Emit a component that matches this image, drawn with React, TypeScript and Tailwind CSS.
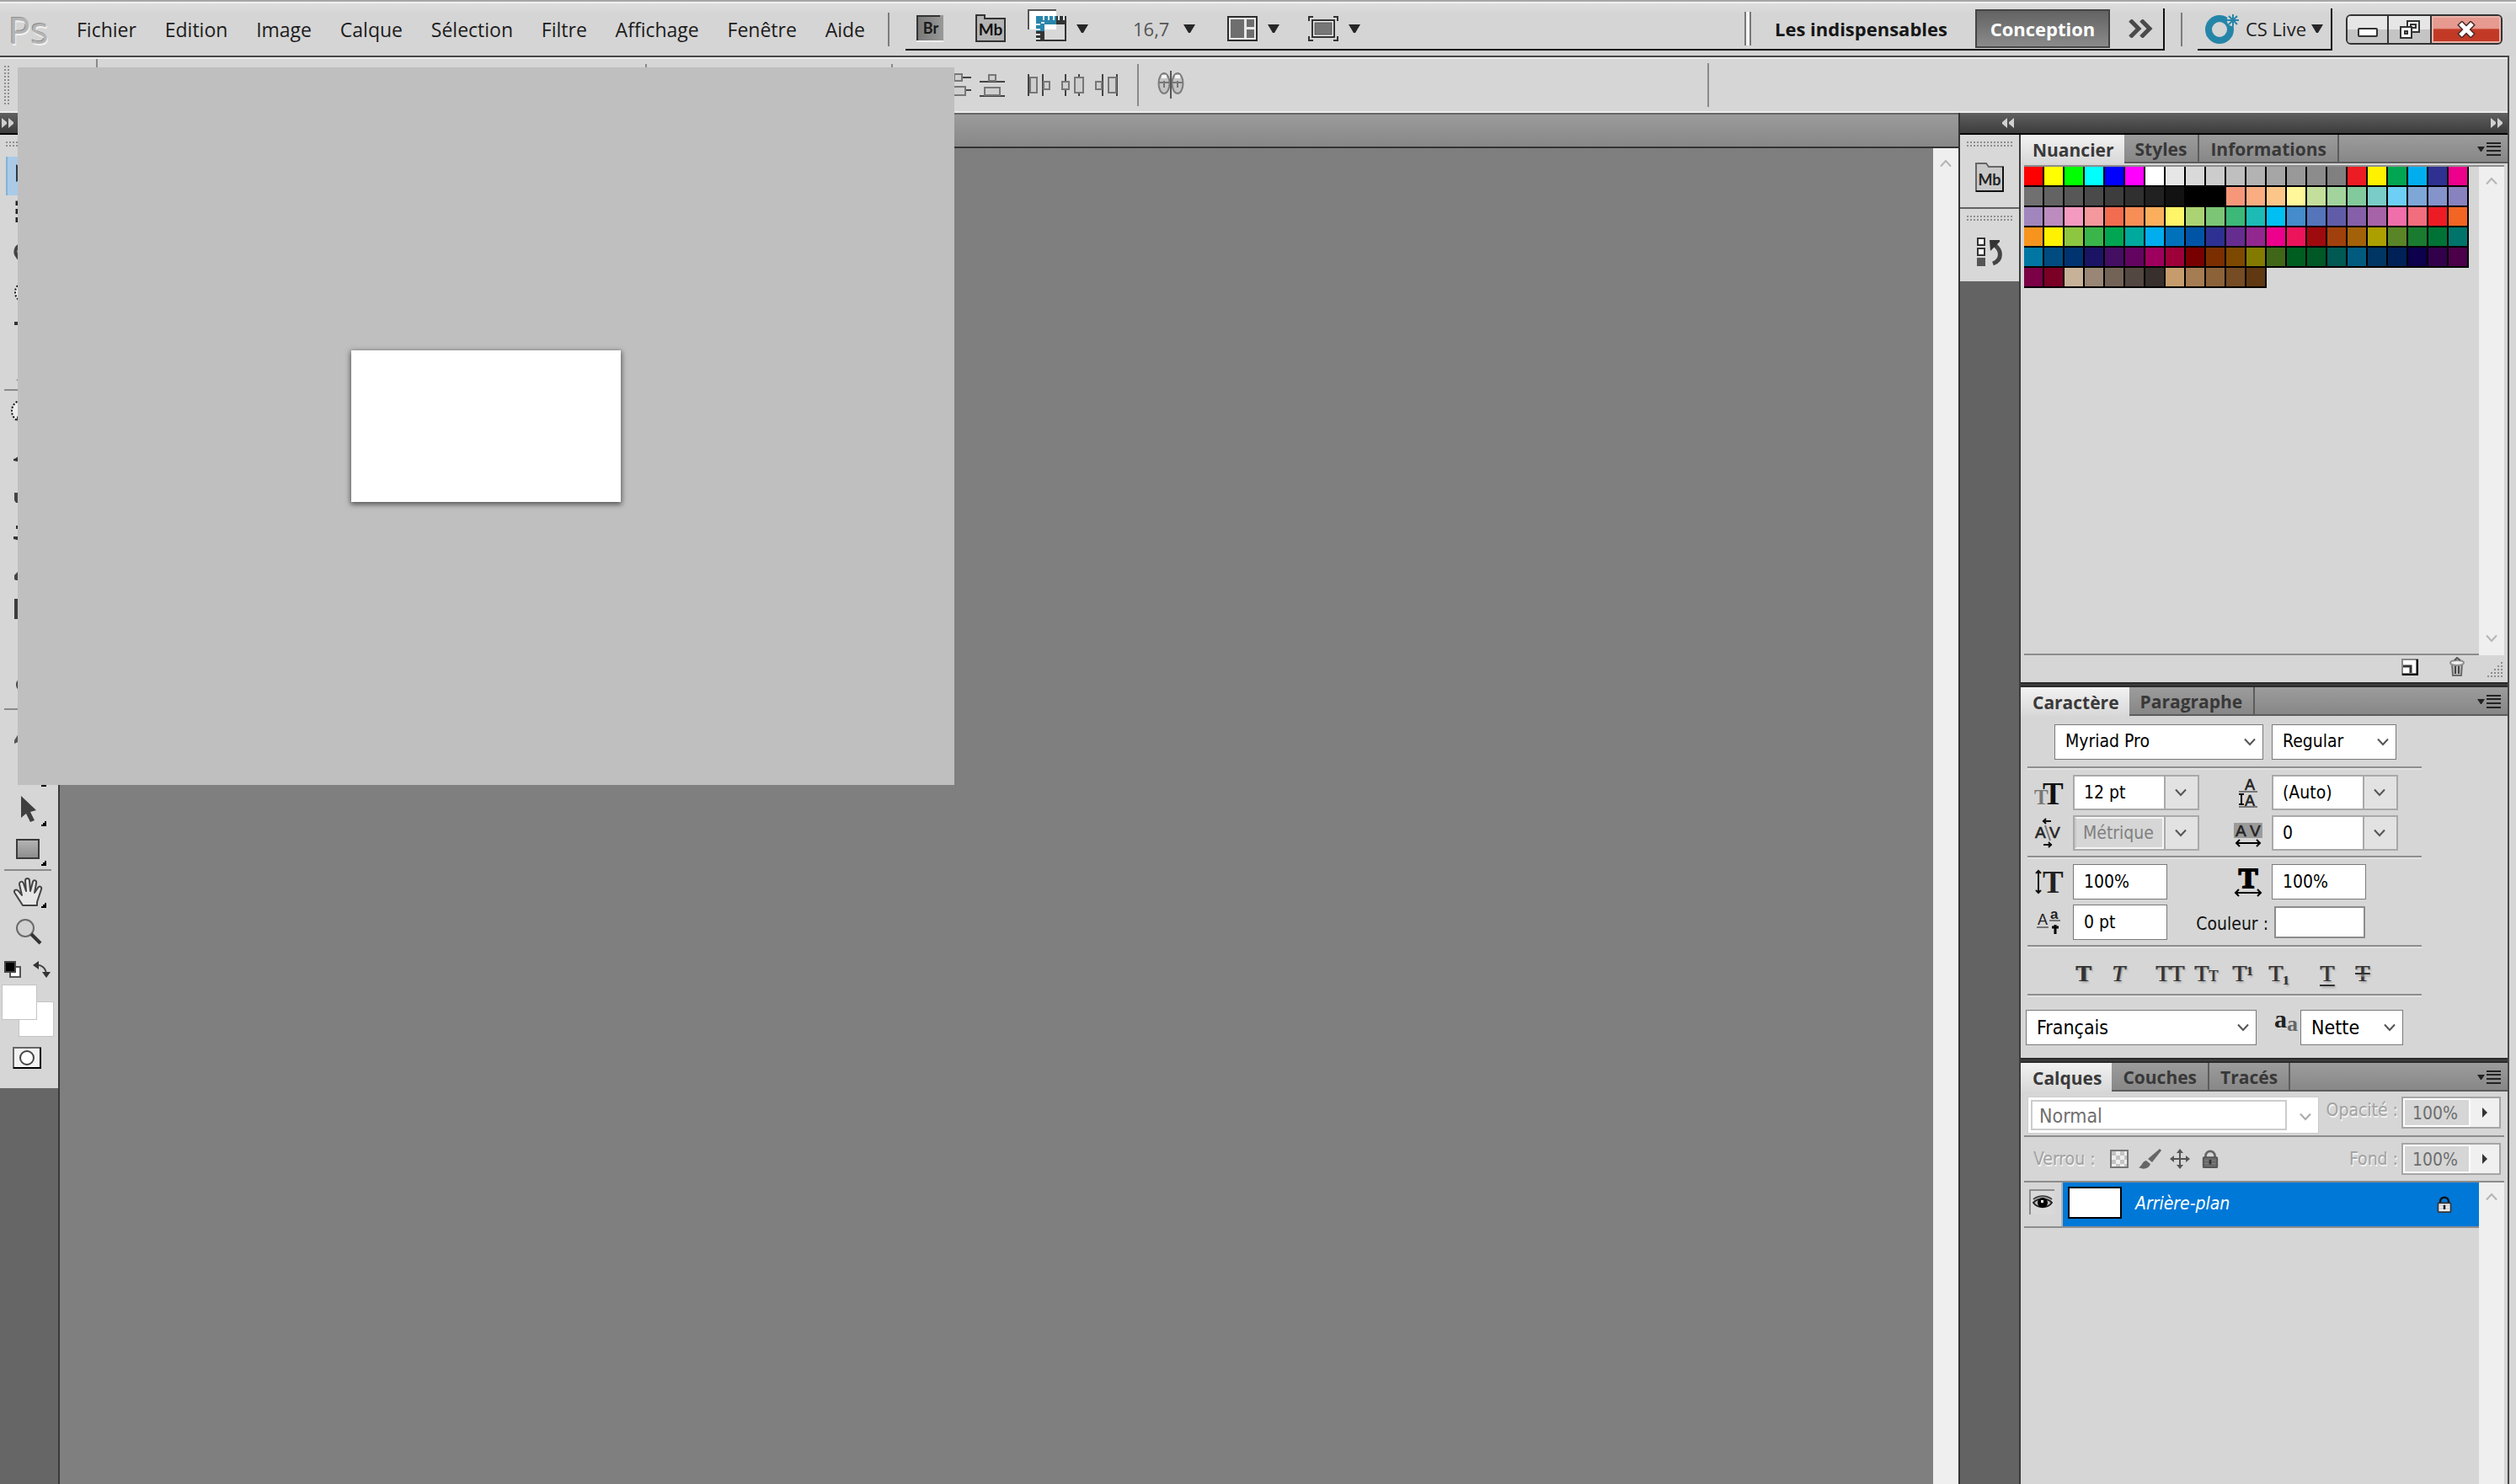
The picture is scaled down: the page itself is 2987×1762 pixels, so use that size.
import React from "react";

const UI = "font-['Open_Sans','Noto_Sans',sans-serif]";
const FIELD = "font-['DejaVu_Sans_Condensed','Noto_Sans',sans-serif]";

/* ---------- shared pieces ---------- */

function Caret({ className = "" }: { className?: string }) {
  return (
    <svg viewBox="0 0 14 10" className={"h-[10px] w-[14px] shrink-0 " + className} aria-hidden="true">
      <path d="M0 0H14L8 10H6Z" fill="#262626" />
    </svg>
  );
}

function Chevron({ up = false, color = "#555", className = "" }: { up?: boolean; color?: string; className?: string }) {
  return (
    <svg viewBox="0 0 14 10" className={"h-[10px] w-[14px] shrink-0 " + className} fill="none" stroke={color} strokeWidth="2" aria-hidden="true">
      <path d={up ? "M1 8.500L7 2L13 8.500" : "M1 1.500L7 8L13 1.500"} />
    </svg>
  );
}

function Grip({ cols, rows, className = "" }: { cols: number; rows: number; className?: string }) {
  const w = cols * 4 - 2;
  const h = rows * 4 - 2;
  const dots: React.ReactNode[] = [];
  for (let r = 0; r < rows; r++)
    for (let c = 0; c < cols; c++) dots.push(<rect key={r + "-" + c} x={c * 4} y={r * 4} width="2" height="2" fill="#8e8e8e" />);
  return (
    <svg width={w} height={h} viewBox={`0 0 ${w} ${h}`} className={"shrink-0 " + className} aria-hidden="true">
      {dots}
    </svg>
  );
}

function DoubleArrow({ left = false }: { left?: boolean }) {
  return (
    <svg viewBox="0 0 14 12" className="h-3 w-[14px] shrink-0" fill="#d0d0d0" aria-hidden="true">
      <path d={left ? "M6 0V12L0 7V5ZM14 0V12L8 7V5Z" : "M0 0V12L6 7V5ZM8 0V12L14 7V5Z"} />
    </svg>
  );
}

function Rule({ className = "" }: { className?: string }) {
  return <div className={"h-1 shrink-0 border-t-2 border-[#8f8f8f] bg-[#e2e2e2] " + className} />;
}

/* ---------- application bar ---------- */

const MENUS = ["Fichier", "Edition", "Image", "Calque", "Sélection", "Filtre", "Affichage", "Fenêtre", "Aide"];

function MbIcon() {
  return (
    <svg viewBox="0 0 36 34" className="h-[34px] w-9" aria-hidden="true">
      <path d="M1 32V1H11V5H35V32Z" fill="#b4b4b4" stroke="#333" strokeWidth="2" />
      <text x="18" y="25" textAnchor="middle" fontSize="19" fontWeight="700" fontFamily="Lato, sans-serif" fill="#111">Mb</text>
    </svg>
  );
}

function AppBar() {
  return (
    <header className="flex h-16 shrink-0 items-center border-t-2 border-[#f0f0f0] bg-[#d6d6d6] bg-linear-to-b from-[#dedede] to-[#d5d5d5] to-20% pr-4 pl-2.5">
      <div className="w-[81px] text-[44px] leading-none text-[#b4b4b4] [text-shadow:1px_2px_0_#f2f2f2,-1px_-1px_0_#8e8e8e]">Ps</div>
      <nav className="flex w-[963px] items-center justify-between pr-[27px] text-[23px] leading-8 text-[#1c1c1c]">
        {MENUS.map((m) => (
          <button key={m} type="button">{m}</button>
        ))}
      </nav>
      <div className="h-10 w-0.5 bg-[#7c7c7c]" />
      <div className="ml-[19px] flex h-[50px] min-w-0 flex-1 items-center border-r-2 border-b-2 border-[#111] pr-3 pl-[13px]">
        <button type="button" aria-label="Bridge" className="mr-[38px] h-8 w-8">
          <svg viewBox="0 0 32 32" className="h-8 w-8" aria-hidden="true">
            <defs>
              <linearGradient id="br" x1="0" x2="1"><stop offset="0" stopColor="#777" /><stop offset="1" stopColor="#999" /></linearGradient>
            </defs>
            <rect width="32" height="30" fill="url(#br)" />
            <path d="M1 30V1H28" fill="none" stroke="#333" strokeWidth="2" />
            <rect y="30" width="32" height="2" fill="#eee" />
            <text x="17" y="22" textAnchor="middle" fontSize="18" fontWeight="700" fontFamily="Lato, sans-serif" fill="#1a1a1a">Br</text>
          </svg>
        </button>
        <button type="button" aria-label="Mini Bridge" className="mr-[26px]"><MbIcon /></button>
        <button type="button" aria-label="Extras" className="mb-2 flex items-center gap-3">
          <svg viewBox="0 0 46 38" className="h-[38px] w-[46px]" aria-hidden="true">
            <rect x="1" y="1" width="33" height="23" fill="#fff" />
            <path d="M1 24V1H34" fill="none" stroke="#555" strokeWidth="2" />
            <rect x="10" y="8" width="36" height="30" fill="#333" />
            <rect x="20" y="18" width="24" height="18" fill="#d8d8d8" />
            <path d="M20 18H34V24H20Z" fill="#fff" />
            <path d="M10 8H34V18H20V26H10Z" fill="#2a86ab" />
            <path d="M16 16H20M19 8V13M25 8V13M31 8V13M37 8V13M43 8V13M10 18H15M10 24H15M10 30H15M10 35H15" stroke="#dfeef4" strokeWidth="2" />
          </svg>
          <Caret className="mt-2" />
        </button>
        <input aria-label="Niveau de zoom" defaultValue="16,7" className="ml-[53px] w-[60px] bg-transparent text-[22px] leading-8 text-[#555]" />
        <button type="button" aria-label="Choisir le zoom"><Caret /></button>
        <button type="button" aria-label="Réorganiser les documents" className="ml-[38px] flex items-center gap-3">
          <svg viewBox="0 0 36 30" className="h-[30px] w-9" aria-hidden="true">
            <rect x="1" y="1" width="34" height="28" fill="#e8e8e8" stroke="#2c2c2c" strokeWidth="2" />
            <rect x="4" y="4" width="16" height="22" fill="#6e6e6e" />
            <rect x="23" y="4" width="9" height="9" fill="#6e6e6e" />
            <rect x="23" y="16" width="9" height="10" fill="#6e6e6e" />
          </svg>
          <Caret />
        </button>
        <button type="button" aria-label="Mode d'écran" className="ml-[34px] flex items-center gap-3">
          <svg viewBox="0 0 36 30" className="h-[30px] w-9" fill="none" stroke="#333" strokeWidth="2" aria-hidden="true">
            <path d="M1 6V1H6M30 1H35V6M35 24V29H30M6 29H1V24" />
            <rect x="5" y="5" width="26" height="20" fill="#eee" />
            <rect x="8" y="8" width="20" height="14" fill="#777" stroke="#555" strokeWidth="1" />
          </svg>
          <Caret />
        </button>
        <div className="ml-auto h-10 w-2 border-x-2 border-[#777] bg-[#f4f4f4]" />
        <button type="button" className="ml-[28px] text-[22px] leading-8 font-bold whitespace-nowrap text-[#161616]">Les indispensables</button>
        <button type="button" className="ml-[33px] h-[46px] w-40 border-2 border-[#444] bg-linear-to-b from-[#636363] to-[#8b8b8b] text-[22px] leading-8 font-bold text-white">Conception</button>
        <button type="button" aria-label="Autres espaces de travail" className="ml-[21px]">
          <svg viewBox="0 0 30 22" className="h-[22px] w-[30px]" fill="none" stroke="#4a4a4a" strokeWidth="5" aria-hidden="true">
            <path d="M3 1L13 11L3 21M16 1L26 11L16 21" />
          </svg>
        </button>
      </div>
      <div className="ml-[19px] h-10 w-0.5 bg-[#7c7c7c]" />
      <button type="button" className="ml-[18px] flex h-[50px] items-center border-r-2 border-b-2 border-[#111] pr-[9px] pl-2 text-[22px] leading-8 text-[#222]">
        <svg viewBox="0 0 42 36" className="mr-[7px] h-9 w-[42px]" fill="none" stroke="#2585a8" aria-hidden="true">
          <circle cx="18" cy="19" r="13" strokeWidth="8" />
          <path d="M34 1V15M27 8H41M29 3L39 13M39 3L29 13" stroke="#d6d6d6" strokeWidth="5" />
          <path d="M34 1V15M27 8H41M29 3L39 13M39 3L29 13" strokeWidth="2" />
        </svg>
        CS Live
        <Caret className="ml-1.5" />
      </button>
      <div className="ml-4 flex h-9 shrink-0 overflow-hidden rounded-md border-2 border-[#333]">
        <button type="button" aria-label="Réduire" className="flex w-[49px] items-center justify-center border-r-2 border-[#333] bg-linear-to-b from-[#e6e6e6] from-50% to-[#c4c4c4] to-50%">
          <svg viewBox="0 0 24 12" className="mt-2 h-3 w-6" aria-hidden="true"><rect x="1" y="1" width="22" height="9" rx="1" fill="#fff" stroke="#333" strokeWidth="2" /></svg>
        </button>
        <button type="button" aria-label="Restaurer" className="flex w-[51px] items-center justify-center border-r-2 border-[#333] bg-linear-to-b from-[#e6e6e6] from-50% to-[#c4c4c4] to-50%">
          <svg viewBox="0 0 24 22" className="h-[22px] w-6" fill="#fff" stroke="#333" strokeWidth="2" aria-hidden="true">
            <path d="M9 1H23V14H9ZM13 5V9H19V5Z" fillRule="evenodd" />
            <path d="M1 8H14V21H1ZM6 13V16H9V13Z" fillRule="evenodd" />
          </svg>
        </button>
        <button type="button" aria-label="Fermer" className="flex w-[82px] items-center justify-center bg-linear-to-b from-[#e79a90] from-45% to-[#c23a26] to-50% shadow-[inset_0_0_0_2px_#e9b3aa]">
          <svg viewBox="0 0 24 20" className="h-5 w-6" aria-hidden="true">
            <path d="M4 2L20 18M20 2L4 18" stroke="#4a2a26" strokeWidth="8" />
            <path d="M5 3L19 17M19 3L5 17" stroke="#fff" strokeWidth="5" />
          </svg>
        </button>
      </div>
    </header>
  );
}

/* ---------- options bar ---------- */

const BLOCK = { fill: "#cfcfcf", stroke: "#777", strokeWidth: 2 };
const BAR = { stroke: "#444", strokeWidth: 2 };

function OptionIcon({ kind }: { kind: string }) {
  return (
    <svg viewBox="0 0 32 28" className="h-7 w-8" aria-hidden="true">
      {kind === "bottom" && (
        <g>
          <path d="M1 5H21M1 20H21" {...BAR} />
          <rect x="1" y="1" width="9" height="8" {...BLOCK} />
          <rect x="-4" y="16" width="18" height="10" {...BLOCK} />
        </g>
      )}
      {kind === "stack" && (
        <g>
          <path d="M1 10H31M1 27H31" {...BAR} />
          <rect x="12" y="2" width="8" height="7" {...BLOCK} />
          <rect x="7" y="17" width="18" height="9" {...BLOCK} />
        </g>
      )}
      {kind === "left" && (
        <g>
          <path d="M3 1V27M20 1V27" {...BAR} />
          <rect x="5" y="5" width="8" height="18" {...BLOCK} />
          <rect x="21" y="10" width="7" height="9" {...BLOCK} />
        </g>
      )}
      {kind === "center" && (
        <g>
          <path d="M7 1V27M23 1V27" {...BAR} />
          <rect x="3" y="10" width="8" height="9" {...BLOCK} />
          <rect x="18" y="5" width="10" height="18" {...BLOCK} />
        </g>
      )}
      {kind === "right" && (
        <g>
          <path d="M11 1V27M28 1V27" {...BAR} />
          <rect x="3" y="10" width="7" height="9" {...BLOCK} />
          <rect x="18" y="5" width="9" height="18" {...BLOCK} />
        </g>
      )}
    </svg>
  );
}

function OptionsBar() {
  return (
    <div className="flex h-[66px] shrink-0 items-center border-y-2 border-[#ececec] bg-[#d6d6d6]">
      <Grip cols={2} rows={12} className="ml-[5px]" />
      <div className="ml-[103px] h-full w-0.5 bg-[#8a8a8a]" />
      <div className="ml-[650px] h-[50px] w-0.5 bg-[#8a8a8a]" />
      <div className="ml-[290px] h-[50px] w-0.5 bg-[#8a8a8a]" />
      <div className="ml-[72px] flex items-center">
        <button type="button" aria-label="Distribuer les bords inférieurs"><OptionIcon kind="bottom" /></button>
        <button type="button" aria-label="Distribuer verticalement" className="-ml-0.5"><OptionIcon kind="stack" /></button>
        <button type="button" aria-label="Distribuer les bords gauches" className="ml-6"><OptionIcon kind="left" /></button>
        <button type="button" aria-label="Distribuer horizontalement" className="ml-2"><OptionIcon kind="center" /></button>
        <button type="button" aria-label="Distribuer les bords droits" className="ml-2"><OptionIcon kind="right" /></button>
      </div>
      <div className="ml-5 h-[50px] w-0.5 bg-[#8a8a8a]" />
      <button type="button" aria-label="Aligner automatiquement les calques" className="ml-[22px]">
        <svg viewBox="0 0 32 34" className="h-[34px] w-8" aria-hidden="true">
          <g fill="#c4c4c4" stroke="#7d7d7d" strokeWidth="2">
            <ellipse cx="8" cy="15" rx="6.500" ry="12" />
            <ellipse cx="24" cy="15" rx="6.500" ry="12" />
          </g>
          <path d="M2 14H14M18 14H30M8 12V20M24 12V20" stroke="#777" strokeWidth="2" />
          <path d="M5 7H11M21 7H27" stroke="#f4f4f4" strokeWidth="4" />
          <path d="M16 0V33" stroke="#555" strokeWidth="2" />
        </svg>
      </button>
      <div className="ml-[621px] h-[52px] w-0.5 bg-[#8a8a8a]" />
    </div>
  );
}

/* ---------- toolbox ---------- */

const TOOL_ART: Record<string, React.ReactNode> = {
  "Déplacement": <path d="M2 4V25L13 20L24 18Z" fill="#2f3a44" />,
  "Rectangle de sélection": <rect x="5" y="3" width="26" height="26" fill="none" stroke="#222" strokeWidth="3" strokeDasharray="6 4" />,
  "Lasso": <path d="M12 8C2 8 2 18 6 22C10 26 28 26 30 16S22 6 12 8ZM3 16L7 24" fill="none" stroke="#444" strokeWidth="4" />,
  "Sélection rapide": <circle cx="15" cy="18" r="12" fill="#eee" stroke="#111" strokeWidth="2" strokeDasharray="2 2" />,
  "Recadrage": <path d="M9 2V26H34M2 9H27V32" fill="none" stroke="#333" strokeWidth="4" />,
  "Pipette": <path d="M4 31L20 15L26 21L10 31Z" fill="#888" />,
  "Correcteur": (
    <g>
      <circle cx="12" cy="17" r="13" fill="#eee" stroke="#111" strokeWidth="2" strokeDasharray="2 2" />
      <path d="M5 26H14L30 8" fill="none" stroke="#333" strokeWidth="5" />
    </g>
  ),
  "Pinceau": <path d="M1 27C8 25 8 20 14 20L30 4L19 24C14 31 8 31 1 29Z" fill="#333" />,
  "Tampon": <path d="M2 20H14V8H22V20H32V32H4L2 29Z" fill="#444" />,
  "Forme d'historique": <path d="M1 25H9V18L30 4L18 24L9 30L1 28ZM4 12H8V16H4Z" fill="#333" />,
  "Gomme": <path d="M2 29V24L16 10H30L20 30H4Z" fill="#444" />,
  "Dégradé": <rect x="2" y="5" width="30" height="24" fill="#3c3c3c" />,
  "Goutte d'eau": <path d="M18 3C22 12 27 16 27 22A9 9 0 0 1 9 22C9 16 14 12 18 3Z" fill="#666" />,
  "Densité -": <ellipse cx="13" cy="13" rx="9" ry="9" fill="#444" />,
  "Plume": <path d="M2 33V29L9 18L22 6L28 12L19 25Z" fill="#555" />,
  "Texte": <path d="M9 5H27V10H20V28H16V10H9Z" fill="#333" />,
};

function ToolIcon({ name }: { name: string }) {
  return (
    <svg viewBox="0 0 36 36" className="h-9 w-9 overflow-visible" aria-hidden="true">
      {TOOL_ART[name]}
      {name === "Sélection de tracé" && <path d="M10 1V27L16 22L21 32L26 30L21 20L28 18Z" fill="#3f3f3f" />}
      {name === "Rectangle" && (
        <g>
          <defs>
            <linearGradient id="rc" x1="0" y1="0" x2="0" y2="1"><stop offset="0" stopColor="#b5b5b5" /><stop offset="1" stopColor="#8c8c8c" /></linearGradient>
          </defs>
          <rect x="5" y="6" width="26" height="22" fill="url(#rc)" stroke="#3a3a3a" strokeWidth="2" />
        </g>
      )}
      {name === "Main" && (
        <path
          d="M12 34L3 20C0 16 4 14 7 17L11 22L8 9C8 5 12 5 13 8L16 17L15 5C15 1 20 1 20 5L21 17L24 6C25 3 29 4 28 8L26 19L30 13C32 10 35 12 34 15L29 30V34Z"
          fill="#e6e6e6" stroke="#444" strokeWidth="2" strokeLinejoin="round"
        />
      )}
      {name === "Zoom" && (
        <g fill="none" stroke="#4a4a4a">
          <circle cx="15" cy="14" r="10" fill="#d2d2d2" stroke="#6a6a6a" strokeWidth="2" />
          <path d="M22 21L33 32" strokeWidth="4" stroke="#333" />
        </g>
      )}
    </svg>
  );
}

function ToolGroup({ tools, tall = true }: { tools: string[]; tall?: boolean }) {
  return (
    <>
      {tools.map((t) => (
        <button
          key={t}
          type="button"
          aria-label={t}
          className={
            "relative flex w-full shrink-0 items-center justify-center pr-1 " +
            (tall ? "h-[47px] " : "h-[46px] ") +
            (t === "Déplacement" ? "ml-[7px] border-l-2 border-[#86b2d6] bg-[#a9cbe8] pr-4" : "")
          }
        >
          <ToolIcon name={t} />
          {t !== "Zoom" && t !== "Déplacement" && (
            <svg viewBox="0 0 6 6" className="absolute right-3.5 bottom-1 h-1.5 w-1.5" aria-hidden="true"><path d="M0 6V4H2V2H4V0H6V6Z" /></svg>
          )}
        </button>
      ))}
    </>
  );
}

function ToolRule() {
  return <div className="mr-2 mb-px ml-[5px] h-0.5 shrink-0 bg-[#8a8a8a]" />;
}

function Toolbox() {
  return (
    <aside className="flex w-[71px] shrink-0 flex-col border-r-2 border-[#3a3a3a] bg-[#666]">
      <div className="flex h-[26px] shrink-0 items-center border-b-2 border-black bg-linear-to-b from-[#606060] to-[#3c3c3c] pl-0.5">
        <DoubleArrow />
      </div>
      <div className="flex h-[1132px] shrink-0 flex-col overflow-hidden bg-[#d6d6d6]">
        <div className="h-[26px] shrink-0 pt-2 pl-[7px]"><Grip cols={14} rows={2} /></div>
        <ToolGroup tall={false} tools={["Déplacement", "Rectangle de sélection", "Lasso", "Sélection rapide", "Recadrage", "Pipette"]} />
        <ToolRule />
        <ToolGroup tools={["Correcteur", "Pinceau", "Tampon", "Forme d'historique", "Gomme", "Dégradé", "Goutte d'eau", "Densité -"]} />
        <ToolRule />
        <ToolGroup tools={["Plume", "Texte", "Sélection de tracé", "Rectangle"]} />
        <ToolRule />
        <ToolGroup tools={["Main", "Zoom"]} />
        <div className="flex shrink-0 justify-between pt-3 pr-2 pl-[5px]">
          <button type="button" aria-label="Couleurs par défaut">
            <svg viewBox="0 0 20 20" className="h-5 w-5" aria-hidden="true">
              <rect x="7" y="7" width="12" height="12" fill="#fff" stroke="#555" strokeWidth="2" />
              <rect x="1" y="1" width="12" height="12" fill="#000" stroke="#444" strokeWidth="2" />
            </svg>
          </button>
          <button type="button" aria-label="Permuter les couleurs">
            <svg viewBox="0 0 22 20" className="h-5 w-[22px]" aria-hidden="true">
              <path d="M3 5C10 4 16 8 16 17" fill="none" stroke="#444" strokeWidth="2" />
              <path d="M0 5L7 0V10ZM16 20L11 13H21Z" fill="#333" />
            </svg>
          </button>
        </div>
        <div className="relative mt-2 ml-0.5 h-[62px] w-[62px] shrink-0">
          <button type="button" aria-label="Couleur d'arrière-plan" className="absolute right-0 bottom-0 h-[42px] w-[42px] border border-[#c4c4c4] bg-white" />
          <button type="button" aria-label="Couleur de premier plan" className="absolute top-0 left-0 h-[42px] w-[42px] border border-[#c4c4c4] bg-white" />
        </div>
        <button type="button" aria-label="Mode masque" className="mt-3 ml-[15px] h-[26px] w-[34px] shrink-0">
          <svg viewBox="0 0 34 26" className="h-[26px] w-[34px]" aria-hidden="true">
            <rect x="1" y="1" width="32" height="24" fill="#f2f2f2" stroke="#666" strokeWidth="2" />
            <path d="M33 1V25H1" fill="none" stroke="#000" strokeWidth="2" />
            <circle cx="17" cy="13" r="8" fill="#fff" stroke="#444" strokeWidth="2" />
          </svg>
        </button>
      </div>
    </aside>
  );
}

/* ---------- panels ---------- */

function PanelTabs({ tabs }: { tabs: string[] }) {
  return (
    <div className="flex h-[34px] shrink-0 bg-linear-to-b from-[#9c9c9c] to-[#868686]">
      <div role="tablist" className="flex">
        {tabs.map((t, i) => (
          <button
            key={t}
            type="button"
            role="tab"
            aria-selected={i === 0}
            className={
              i === 0
                ? "bg-linear-to-b from-[#f2f2f2] to-[#d8d8d8] pt-0.5 pr-3 pl-[14px] text-[21px] leading-8 font-bold text-[#3a3a3a]"
                : "border-r-2 border-b-2 border-[#5c5c5c] px-[13px] pt-0.5 text-[21px] leading-[30px] font-bold text-[#383838]"
            }
          >
            {t}
          </button>
        ))}
      </div>
      <div className="flex flex-1 items-center justify-end border-b-2 border-[#5c5c5c] pt-0.5 pr-2">
        <button type="button" aria-label={"Menu du panneau " + tabs[0]}>
          <svg viewBox="0 0 28 16" className="h-4 w-7" aria-hidden="true">
            <path d="M0 5H9L5 11H4Z" fill="#222" />
            <path d="M11 1H28M11 5H28M11 10H28M11 15H28" stroke="#222" strokeWidth="2" />
          </svg>
        </button>
      </div>
    </div>
  );
}

function PanelGap() {
  return <div className="h-1.5 shrink-0 border-y-2 border-[#2b2b2b] bg-[#3d3d3d]" />;
}

const SWATCHES = (
  "ff0000 ffff00 00ff00 00ffff 0000ff ff00ff ffffff e6e6e6 d9d9d9 cccccc bfbfbf b3b3b3 a6a6a6 999999 8c8c8c 808080 ed1c24 fff200 00a651 00aeef 2e3192 ec008c " +
  "707070 636363 575757 4a4a4a 3d3d3d 303030 212121 121212 000000 000000 f7977a f9ad81 fdc689 fff799 c4df9b a3d39c 82ca9c 7accc8 6dcff6 7ea7d8 8493ca 8882be " +
  "a186be bc8cbf f49ac1 f5989d f26c4f f68e56 fbaf5d fff568 acd373 7cc576 3cb878 1cbbb4 00bff3 448ccb 5574b9 605ca8 855fa8 a763a8 f06ea9 f26d7d ed1c24 f26522 " +
  "f7941d fff200 8dc73f 39b54a 00a651 00a99d 00aeef 0072bc 0054a6 2e3192 662d91 92278f ec008c ed145b 9e0b0f a0410d a36209 aba000 598527 1a7b30 007236 00746b " +
  "0076a3 004b80 003471 1b1464 440e62 630460 9e005d 9e0039 790000 7b2e00 7d4900 827b00 406618 005e20 005826 005952 005b7f 003663 002157 0d004c 32004b 4b0049 " +
  "7b0046 7a0026 c7b299 998675 736357 534741 37302d c69c6d a67c52 8c6239 754c24 603913"
).split(" ");

function SwatchesPanel() {
  return (
    <section className="flex h-[650px] shrink-0 flex-col bg-[#d6d6d6]">
      <PanelTabs tabs={["Nuancier", "Styles", "Informations"]} />
      <div className="mx-1 mt-0.5 flex flex-1 border-t-2 border-[#8d8d8d]">
        <div className="flex-1 border-b-2 border-[#8d8d8d]">
          <div className="flex w-132 flex-wrap">
            {SWATCHES.map((c, i) => (
              <button key={i} type="button" aria-label={"#" + c} className="h-6 w-6 border-r-2 border-b-2 border-black" style={{ backgroundColor: "#" + c }} />
            ))}
          </div>
        </div>
        <div className="flex w-[30px] flex-col items-center justify-between bg-[#efefef] pt-3 pb-[15px]">
          <Chevron up color="#b5b5b5" />
          <Chevron color="#b5b5b5" />
        </div>
      </div>
      <div className="flex h-8 shrink-0 items-center justify-end pr-1.5 pb-1">
        <button type="button" aria-label="Nouvelle nuance" className="mr-9">
          <svg viewBox="0 0 20 20" className="h-5 w-5" aria-hidden="true">
            <rect x="1" y="1" width="18" height="18" fill="#fff" stroke="#888" strokeWidth="2" />
            <path d="M19 1V19H1" fill="none" stroke="#000" strokeWidth="3" />
            <path d="M2 9H11V17" fill="none" stroke="#333" strokeWidth="3" />
          </svg>
        </button>
        <button type="button" aria-label="Supprimer la nuance" className="mr-[26px]">
          <svg viewBox="0 0 20 24" className="h-6 w-5" fill="none" stroke="#6c6c6c" strokeWidth="2" aria-hidden="true">
            <path d="M4 8L5 22H15L16 8Z" fill="#bdbdbd" />
            <path d="M8 10V20M12 10V20" stroke="#444" />
            <ellipse cx="10" cy="7" rx="8" ry="3" fill="#eee" stroke="#909090" />
            <path d="M7 4L10 1L14 4" stroke="#555" />
          </svg>
        </button>
        <svg viewBox="0 0 18 18" className="mt-1.5 h-[18px] w-[18px]" fill="#8e8e8e" aria-hidden="true">
          {[0, 1, 2, 3, 4].map((r) =>
            [0, 1, 2, 3, 4].filter((c) => c + r >= 4).map((c) => <rect key={r + "-" + c} x={c * 4} y={r * 4} width="2" height="2" />)
          )}
        </svg>
      </div>
    </section>
  );
}

function Select({ label, value, width, big = false }: { label: string; value: string; width: string; big?: boolean }) {
  return (
    <div className={"relative h-[42px] shrink-0 " + width}>
      <select aria-label={label} defaultValue={value} className={"h-full w-full appearance-none border border-[#7a7a7a] bg-white pl-3 text-black " + FIELD + (big ? " text-[23px]" : " text-[21px]")}>
        <option>{value}</option>
      </select>
      <Chevron className="pointer-events-none absolute top-4 right-[9px]" />
    </div>
  );
}

function Combo({ label, value, disabled = false }: { label: string; value: string; disabled?: boolean }) {
  return (
    <div className="flex h-[42px] w-[150px] shrink-0 border-2 border-[#a9a9a9]">
      <input
        aria-label={label}
        defaultValue={value}
        disabled={disabled}
        className={"min-w-0 flex-1 pt-0.5 text-[21px] " + FIELD + (disabled ? " border-2 border-[#f6f6f6] border-l-[#c8c8c8] bg-[#d6d6d6] pl-2 text-[#808080]" : " bg-white pl-[11px] text-black")}
      />
      <button type="button" aria-label={"Choisir : " + label} className="flex w-10 items-center justify-center border-l-2 border-[#a9a9a9] bg-[#e2e2e2] pr-[3px]">
        <Chevron />
      </button>
    </div>
  );
}

function Field({ label, value }: { label: string; value: string }) {
  return <input aria-label={label} defaultValue={value} className={"h-[42px] w-28 shrink-0 border border-[#7a7a7a] bg-white pl-3 text-[21px] text-black " + FIELD} />;
}

function CharIcon({ kind }: { kind: string }) {
  const serif = "'Liberation Serif', serif";
  const sans = "'Liberation Sans', sans-serif";
  return (
    <svg viewBox="0 0 36 36" className="h-9 w-9 shrink-0 overflow-visible" aria-hidden="true">
      {kind === "size" && (
        <g fontFamily={serif} fontWeight="700">
          <text x="0" y="32" fontSize="25" fill="#777">T</text>
          <text x="10" y="32" fontSize="37" fill="#111">T</text>
        </g>
      )}
      {kind === "leading" && (
        <g fontFamily={sans} fill="#222" stroke="#222" strokeWidth="0.600">
          <text x="14" y="15" fontSize="18">A</text>
          <text x="14" y="34" fontSize="18">A</text>
          <path d="M7 17H29M7 35H29" stroke="#777" strokeWidth="2" />
          <path d="M10 20V32M7 20H13M7 32H13" stroke="#000" strokeWidth="2" />
        </g>
      )}
      {kind === "kerning" && (
        <g fontFamily={sans} fill="#222" stroke="#222" strokeWidth="0.600">
          <text x="1" y="24" fontSize="19">A</text>
          <text x="18" y="24" fontSize="19">V</text>
          <path d="M13 9L19 27" stroke="#777" strokeWidth="2" />
          <path d="M10 4H20M14 1L11 4L14 7M11 32H21M17 29L20 32L17 35" stroke="#111" strokeWidth="2" fill="none" />
        </g>
      )}
      {kind === "tracking" && (
        <g fontFamily={sans} fill="#222">
          <rect x="1" y="6" width="34" height="18" fill="#9a9a9a" />
          <text x="3" y="22" fontSize="19" stroke="#222" strokeWidth="0.600">A</text>
          <text x="20" y="22" fontSize="19" stroke="#222" strokeWidth="0.600">V</text>
          <path d="M4 30H32M8 26L4 30L8 34M28 26L32 30L28 34" stroke="#000" strokeWidth="2" fill="none" />
        </g>
      )}
      {kind === "vscale" && (
        <g>
          <text x="10" y="31" fontSize="37" fontFamily={serif} fontWeight="700" fill="#222">T</text>
          <path d="M5 5V31M2 8L5 5L8 8M2 28L5 31L8 28" stroke="#111" strokeWidth="2" fill="none" />
        </g>
      )}
      {kind === "hscale" && (
        <g>
          <text x="18" y="25" textAnchor="middle" fontSize="34" fontFamily={serif} fontWeight="700" fill="#000" stroke="#000" strokeWidth="2">T</text>
          <path d="M3 31H33M7 27L3 31L7 35M29 27L33 31L29 35" stroke="#000" strokeWidth="2" fill="none" />
        </g>
      )}
      {kind === "baseline" && (
        <g fontFamily={sans} fill="#222">
          <text x="4" y="21" fontSize="18">A</text>
          <text x="19" y="14" fontSize="17" fontWeight="700">a</text>
          <path d="M3 24H17M18 16H31" stroke="#777" strokeWidth="2" />
          <path d="M25 32V21M21 24H29" stroke="#000" strokeWidth="3" />
        </g>
      )}
    </svg>
  );
}

const STYLE_BUTTON = "h-7 shrink-0 font-['Liberation_Serif',serif] text-[28px] leading-7 text-[#333] [text-shadow:1px_0_0_#555,2px_2px_2px_#aaa]";

function CharacterPanel() {
  return (
    <section className="flex h-[440px] shrink-0 flex-col bg-[#d6d6d6]">
      <PanelTabs tabs={["Caractère", "Paragraphe"]} />
      <div className="flex gap-2.5 pt-2.5 pl-10">
        <Select label="Police" value="Myriad Pro" width="w-62" />
        <Select label="Style de police" value="Regular" width="w-37" />
      </div>
      <Rule className="mt-2 ml-2 w-117" />
      <div className="mt-1.5 ml-4 grid w-max grid-cols-[46px_190px_46px_150px] gap-y-1.5">
        <span className="self-center"><CharIcon kind="size" /></span><Combo label="Corps" value="12 pt" />
        <span className="self-center"><CharIcon kind="leading" /></span><Combo label="Interligne" value="(Auto)" />
        <span className="self-center"><CharIcon kind="kerning" /></span><Combo label="Crénage" value="Métrique" disabled />
        <span className="self-center"><CharIcon kind="tracking" /></span><Combo label="Approche" value="0" />
      </div>
      <Rule className="mt-1.5 ml-2 w-117" />
      <div className="mt-1.5 ml-4 grid w-max grid-cols-[46px_190px_46px_150px] gap-y-1.5">
        <span className="self-center"><CharIcon kind="vscale" /></span><Field label="Échelle verticale" value="100%" />
        <span className="self-center"><CharIcon kind="hscale" /></span><Field label="Échelle horizontale" value="100%" />
        <span className="self-center"><CharIcon kind="baseline" /></span><Field label="Décalage vertical" value="0 pt" />
        <div className="col-span-2 -ml-11 flex items-center gap-[7px]">
          <label htmlFor="couleur" className={"flex w-[86px] justify-end pt-1.5 text-[21px] whitespace-nowrap text-[#111] " + FIELD}>Couleur :</label>
          <button id="couleur" type="button" aria-label="Couleur" className="h-[38px] w-[108px] border-2 border-[#8c8c8c] bg-white" />
        </div>
      </div>
      <Rule className="mt-1.5 ml-2 w-117" />
      <div className="mt-3 ml-[65px] flex h-9 items-center">
        <button type="button" aria-label="Faux gras" className={STYLE_BUTTON + " w-[43px] text-left font-bold"}>T</button>
        <button type="button" aria-label="Faux italique" className={STYLE_BUTTON + " w-[52px] text-left italic"}>T</button>
        <button type="button" aria-label="Tout en capitales" className={STYLE_BUTTON + " w-[46px] text-left"}>TT</button>
        <button type="button" aria-label="Petites capitales" className={STYLE_BUTTON + " w-[45px] text-left"}>T<span className="text-[18px]">T</span></button>
        <button type="button" aria-label="Exposant" className={STYLE_BUTTON + " w-[43px] text-left"}>T<sup className="text-[14px] font-bold">1</sup></button>
        <button type="button" aria-label="Indice" className={STYLE_BUTTON + " w-[61px] text-left"}>T<sub className="text-[14px] font-bold">1</sub></button>
        <button type="button" aria-label="Souligné" className={STYLE_BUTTON + " w-[42px] text-left underline underline-offset-4"}>T</button>
        <button type="button" aria-label="Barré" className={STYLE_BUTTON + " text-left line-through"}>T</button>
      </div>
      <Rule className="mt-1.5 ml-2 w-117" />
      <div className="mt-3.5 flex items-center pl-1.5">
        <Select label="Langue" value="Français" width="w-[274px]" big />
        <span className="mb-2 ml-[21px] flex h-9 w-[31px] font-['Liberation_Serif',serif] text-[30px] leading-6 font-bold text-[#222]" aria-hidden="true">
          a<span className="pt-1.5 text-[26px] text-[#666]">a</span>
        </span>
        <Select label="Lissage" value="Nette" width="w-[122px]" big />
      </div>
    </section>
  );
}

function Percent({ label }: { label: string }) {
  return (
    <div className="flex h-[38px] w-[118px] shrink-0 border-2 border-[#a5a5a5] bg-[#f0f0f0]">
      <input aria-label={label} defaultValue="100%" disabled className={"w-20 border-2 border-white bg-[#d6d6d6] pt-[3px] pl-[9px] text-[21px] text-[#6e6e6e] " + FIELD} />
      <button type="button" aria-label={"Régler : " + label} className="flex flex-1 items-center justify-center">
        <svg viewBox="0 0 6 12" className="h-3 w-1.5" aria-hidden="true"><path d="M0 0L6 6L0 12Z" fill="#333" /></svg>
      </button>
    </div>
  );
}

const DIM_LABEL = "text-[21px] leading-7 whitespace-nowrap text-[#a2a2a2] [text-shadow:1px_2px_0_#f4f4f4] " + FIELD;

function Padlock({ light = false }: { light?: boolean }) {
  return (
    <svg viewBox="0 0 20 24" className={light ? "h-5 w-[18px]" : "h-[22px] w-5"} aria-hidden="true">
      <path d="M4 11V8A6 6 0 0 1 16 8V11" fill="none" stroke={light ? "#111" : "#666"} strokeWidth="3" />
      <rect x="1" y="10" width="18" height="13" rx="1" fill={light ? "#eee" : "#6a6a6a"} stroke={light ? "#333" : "#555"} strokeWidth="2" />
      <path d="M3 14H17M3 18H17" stroke={light ? "#bbb" : "#858585"} strokeWidth="1" />
      <path d="M10 13V19" stroke={light ? "#111" : "#333"} strokeWidth="3" />
    </svg>
  );
}

function LayersPanel() {
  return (
    <section className="flex min-h-0 flex-1 flex-col bg-[#d6d6d6]">
      <PanelTabs tabs={["Calques", "Couches", "Tracés"]} />
      <div className="flex h-13 shrink-0 items-start pt-1.5 pr-2 pl-2">
        <div className="relative h-11 w-[346px] shrink-0 border border-[#ccc] bg-white p-[3px] pr-[37px]">
          <select aria-label="Mode de fusion" disabled defaultValue="Normal" className={"h-9 w-full appearance-none border-2 border-[#ccc] bg-white pl-2 text-[23px] text-[#6e6e6e] opacity-100 " + FIELD}>
            <option>Normal</option>
          </select>
          <Chevron color="#aaa" className="absolute top-[18px] right-2" />
        </div>
        <span className={"ml-auto pt-0.5 pr-1 " + DIM_LABEL}>Opacité :</span>
        <Percent label="Opacité" />
      </div>
      <div className="mx-1 h-0.5 shrink-0 bg-[#8d8d8d]" />
      <div className="flex h-[52px] shrink-0 items-center pr-2 pl-[15px]">
        <span className={"w-[91px] " + DIM_LABEL}>Verrou :</span>
        <button type="button" aria-label="Verrouiller les pixels transparents" className="mr-3">
          <svg viewBox="0 0 22 22" className="h-[22px] w-[22px]" aria-hidden="true">
            <rect x="1" y="1" width="20" height="20" fill="#eee" stroke="#777" strokeWidth="2" />
            <path d="M2 2H7V7H2ZM12 2H17V7H12ZM7 7H12V12H7ZM17 7H20V12H17ZM2 12H7V17H2ZM12 12H17V17H12ZM7 17H12V20H7ZM17 17H20V20H17Z" fill="#c4c4c4" />
          </svg>
        </button>
        <button type="button" aria-label="Verrouiller les pixels de l'image" className="mr-[9px]">
          <svg viewBox="0 0 28 24" className="h-6 w-7" fill="#666" aria-hidden="true">
            <path d="M0 22C4 21 4 15 9 14L14 18C12 24 5 25 0 22ZM11 12L25 0L27 2L16 16Z" />
          </svg>
        </button>
        <button type="button" aria-label="Verrouiller la position" className="mr-3.5">
          <svg viewBox="0 0 24 24" className="h-6 w-6" aria-hidden="true">
            <path d="M12 3V21M3 12H21" stroke="#555" strokeWidth="2" />
            <path d="M12 0L16 5H8ZM12 24L8 19H16ZM0 12L5 8V16ZM24 12L19 16V8Z" fill="#555" />
          </svg>
        </button>
        <button type="button" aria-label="Tout verrouiller"><Padlock /></button>
        <span className={"ml-auto pr-1 " + DIM_LABEL}>Fond :</span>
        <Percent label="Fond" />
      </div>
      <div className="mx-1 flex min-h-0 flex-1 border-t-2 border-[#8d8d8d]">
        <div className="flex-1">
          <div className="flex h-[54px] border-b-2 border-[#8d8d8d]">
            <div className="w-[46px] border-r-2 border-[#b4b4b4] pt-2 pl-1.5">
              <button type="button" aria-label="Visibilité du calque" className="flex h-[30px] w-[30px] items-center justify-center border-t-2 border-l-2 border-[#8d8d8d] bg-[#d9d9d9]">
                <svg viewBox="0 0 24 18" className="h-[18px] w-6" aria-hidden="true">
                  <path d="M1 9C6 3 18 3 23 9C18 16 6 16 1 9Z" fill="#bbb" stroke="#222" strokeWidth="2" />
                  <circle cx="12" cy="9" r="6" fill="#000" />
                  <path d="M1 5C7 0 17 0 23 5" fill="none" stroke="#444" strokeWidth="2" />
                  <rect x="10" y="6" width="3" height="3" fill="#fff" />
                </svg>
              </button>
            </div>
            <button type="button" className="flex flex-1 items-center bg-[#0078d7] pr-8 pl-1.5 text-left">
              <span className="mb-1 h-[38px] w-16 border-2 border-black bg-white" />
              <span className={"ml-4 flex-1 text-[21px] text-white italic " + FIELD}>Arrière-plan</span>
              <Padlock light />
            </button>
          </div>
        </div>
        <div className="flex w-[30px] flex-col items-center bg-[#efefef] pt-3">
          <Chevron up color="#b5b5b5" />
        </div>
      </div>
    </section>
  );
}

function IconDock() {
  return (
    <div className="flex w-[72px] shrink-0 flex-col gap-0.5 border-r-2 border-[#3a3a3a] bg-[#636363]">
      <div className="flex h-[86px] flex-col items-center bg-[#d8d8d8] pt-2">
        <Grip cols={14} rows={2} />
        <button type="button" aria-label="Mini Bridge" className="mt-[19px]">
          <svg viewBox="0 0 34 36" className="h-9 w-[34px]" aria-hidden="true">
            <path d="M1 34V1H13L16 5H33V34Z" fill="#c9c9c9" stroke="#666" strokeWidth="2" />
            <path d="M33 5V34H1" fill="none" stroke="#111" strokeWidth="2" />
            <text x="17" y="27" textAnchor="middle" fontSize="18" fontWeight="700" fontFamily="Lato, sans-serif" fill="#222">Mb</text>
          </svg>
        </button>
      </div>
      <div className="flex h-[86px] flex-col items-center bg-[#d8d8d8] pt-2">
        <Grip cols={14} rows={2} />
        <button type="button" aria-label="Historique" className="mt-[19px]">
          <svg viewBox="0 0 32 36" className="h-9 w-8" aria-hidden="true">
            <g fill="#fff" stroke="#333" strokeWidth="2">
              <rect x="2" y="2" width="8" height="8" />
              <rect x="2" y="14" width="8" height="8" />
            </g>
            <rect x="1" y="25" width="10" height="10" fill="#555" />
            <path d="M20 32C31 28 31 16 21 9" fill="none" stroke="#444" strokeWidth="5" />
            <path d="M16 4H28V6L17 17Z" fill="#333" />
          </svg>
        </button>
      </div>
    </div>
  );
}

export default function App() {
  return (
    <div className={"relative flex h-screen flex-col overflow-hidden border-t-2 border-[#a6a6a6] bg-[#d6d6d6] " + UI}>
      <AppBar />
      <main className="mr-2 flex min-h-0 flex-1 flex-col border-t-2 border-r-2 border-[#474747]">
        <OptionsBar />
        <div className="flex min-h-0 flex-1">
          <Toolbox />
          <div className="flex min-w-0 flex-1 flex-col border-r-2 border-[#333]">
            <div className="h-[42px] shrink-0 border-t-2 border-b-2 border-t-[#666] border-b-[#333] bg-linear-to-b from-[#9b9b9b] to-[#888]" />
            <div className="flex min-h-0 flex-1">
              <div className="flex-1 bg-[#7f7f7f]" />
              <div className="flex w-[30px] flex-col items-center bg-[#efefef] pt-[13px]">
                <Chevron up color="#b5b5b5" />
              </div>
            </div>
          </div>
          <div className="flex w-[650px] shrink-0 flex-col">
            <div className="flex h-[26px] shrink-0 items-center justify-between border-b-2 border-black bg-linear-to-b from-[#606060] to-[#3c3c3c] pr-1.5 pl-[50px]">
              <DoubleArrow left />
              <DoubleArrow />
            </div>
            <div className="flex min-h-0 flex-1">
              <IconDock />
              <div className="flex min-w-0 flex-1 flex-col">
                <SwatchesPanel />
                <PanelGap />
                <CharacterPanel />
                <PanelGap />
                <LayersPanel />
              </div>
            </div>
          </div>
        </div>
      </main>
      <div className="absolute top-[78px] left-[21px] flex h-[852px] w-[1112px] items-center justify-center bg-[#bfbfbf]">
        <div className="h-[180px] w-80 bg-white shadow-[0_2px_6px_1px_rgba(0,0,0,0.55)]" />
      </div>
    </div>
  );
}
